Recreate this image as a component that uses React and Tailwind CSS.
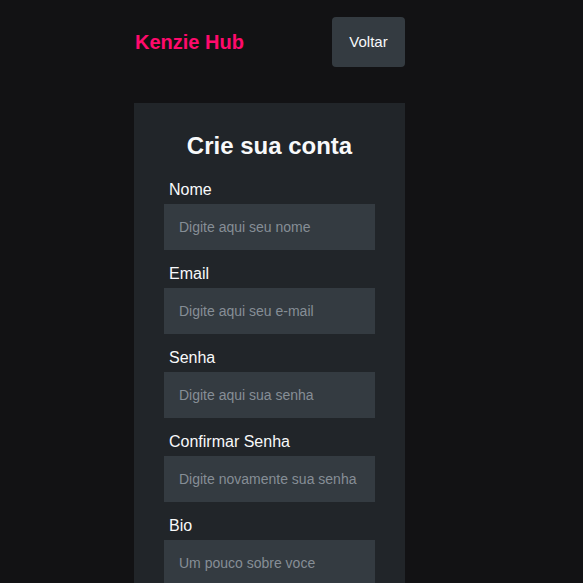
import React from 'react';

const FIELDS = [
  { label: 'Nome', placeholder: 'Digite aqui seu nome', type: 'text' },
  { label: 'Email', placeholder: 'Digite aqui seu e-mail', type: 'email' },
  { label: 'Senha', placeholder: 'Digite aqui sua senha', type: 'password' },
  { label: 'Confirmar Senha', placeholder: 'Digite novamente sua senha', type: 'password' },
  { label: 'Bio', placeholder: 'Um pouco sobre voce', type: 'text' },
  { label: 'Contato', placeholder: 'Opção de contato', type: 'text' },
];

export default function App() {
  return (
    <div className="min-h-screen bg-[#121214] font-['Liberation_Sans',Arial,sans-serif] pl-[134px] pt-[17px] pb-10">
      <div className="w-[271px]">
        {/* Header */}
        <header className="flex items-center justify-between h-[50px]">
          <h1 className="pl-px text-[20px] font-bold text-[#FF0A6C] leading-none">Kenzie Hub</h1>
          <button className="w-[73px] h-[50px] rounded-[4px] bg-[#343B41] text-[15px] text-[#F8F9FA]">
            Voltar
          </button>
        </header>

        {/* Form card */}
        <form className="mt-[36px] bg-[#212529] px-[30px] pt-[29px] pb-[30px] flex flex-col">
          <h2 className="text-[24px] leading-[28px] font-bold text-[#F8F9FA] text-center mb-[20px]">
            Crie sua conta
          </h2>
          <div className="flex flex-col gap-[14px]">
            {FIELDS.map(f => (
              <div key={f.label} className="flex flex-col">
                <label className="text-[16px] leading-[18px] text-[#F8F9FA] pl-[5px] pt-[1px] mb-[5px]">{f.label}</label>
                <input
                  type={f.type}
                  placeholder={f.placeholder}
                  className="h-[46px] w-full bg-[#343B41] pl-[15px] pr-2 text-[14px] text-[#F8F9FA] placeholder-[#868E96] outline-none"
                />
              </div>
            ))}
            <div className="flex flex-col">
              <label className="text-[16px] leading-[18px] text-[#F8F9FA] pl-[5px] pt-[1px] mb-[5px]">Selecionar módulo</label>
              <select className="h-[46px] w-full bg-[#343B41] pl-[15px] text-[14px] text-[#868E96] outline-none">
                <option>Primeiro módulo</option>
              </select>
            </div>
          </div>
          <button type="button" className="mt-[20px] h-[48px] rounded-[4px] bg-[#59323F] text-[16px] text-white">
            Cadastrar
          </button>
        </form>
      </div>
    </div>
  );
}
